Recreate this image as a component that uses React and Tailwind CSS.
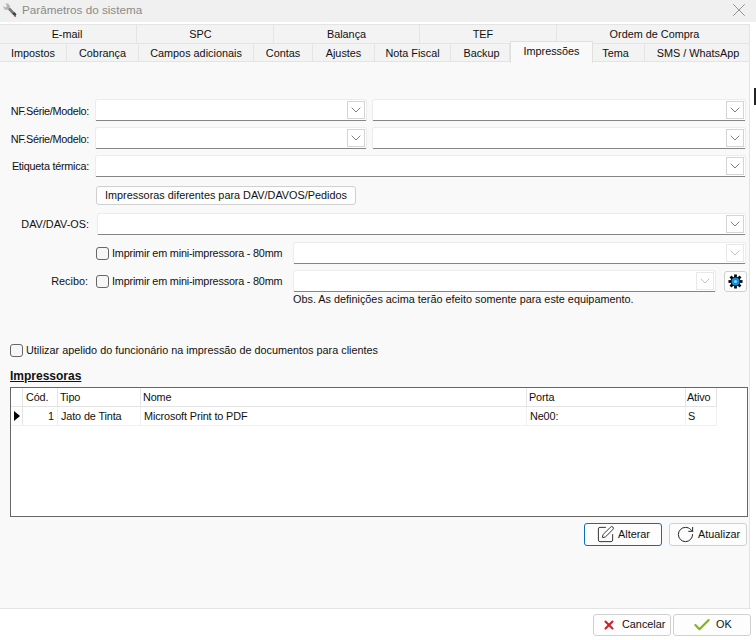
import { Check, ChevronDown, RotateCw, SquarePen, X } from "lucide-react";

const topTabs = [
  ["E-mail", "w-[137px] pr-[2px]"],
  ["SPC", "w-[137px] pr-[9px]"],
  ["Balança", "w-[146px]"],
  ["TEF", "w-[137px] pr-[10px]"],
  ["Ordem de Compra", "w-[193px] pl-[3px]"],
];

const tabs = [
  ["Impostos", "w-[67px]"],
  ["Cobrança", "w-[72px]"],
  ["Campos adicionais", "w-[115px]"],
  ["Contas", "w-[59px]"],
  ["Ajustes", "w-[62px]"],
  ["Nota Fiscal", "w-[76px]"],
  ["Backup", "w-[59px] pl-[3px]"],
  ["Impressões", "w-[83px]", true],
  ["Tema", "w-[52px] pr-[6px]"],
  ["SMS / WhatsApp", "w-[105px] pl-[2px]"],
];

const Combo = ({ className = "", disabled = false }) => (
  <div className={`flex h-[22px] items-center justify-end rounded-t-[3px] border border-b-0 border-[#ececec] bg-white pr-[1px] shadow-[inset_0_-1px_0_#858585] ${className}`}>
    <span className={`mb-[1px] flex h-[18px] w-[18px] items-center justify-center border bg-white ${disabled ? "border-[#e8e8e8] text-[#b5b5b5]" : "border-[#d4d4d4] text-[#666]"}`}>
      <ChevronDown className="h-[16px] w-[16px]" strokeWidth={1.25} />
    </span>
  </div>
);

const Label = ({ children, className = "" }) => <span className={`shrink-0 text-right ${className}`}>{children}</span>;

const CheckBox = () => <span className="h-[13px] w-[13px] shrink-0 rounded-[3px] border border-[#666] bg-[#f6f6f6]" />;

const Gear = () => (
  <svg viewBox="0 0 16 16" className="h-[15px] w-[15px]">
    <g fill="#0a0a0a">
      <rect x="6.5" y="0.5" width="3" height="15" />
      <rect x="0.5" y="6.5" width="15" height="3" />
      <rect x="6.5" y="0.5" width="3" height="15" transform="rotate(45 8 8)" />
      <rect x="6.5" y="0.5" width="3" height="15" transform="rotate(-45 8 8)" />
    </g>
    <circle cx="8" cy="8" r="5.2" fill="#0a0a0a" />
    <circle cx="8" cy="8" r="4.2" fill="#0d8fe0" />
    <circle cx="8" cy="8" r="1.7" fill="#8fd0f5" />
  </svg>
);

const Wrench = () => (
  <svg viewBox="0 0 16 16" className="h-[16px] w-[16px]">
    <path d="M1 4l2.5 1.5L5 4 3.5 1.5 6 1.5 8 4l-.5 2.5L5 8 2.5 7.5z" fill="#b4b4b4" />
    <path d="M6 7.5l2-2 5.5 6-2 2z" fill="#7a7a7a" />
    <path d="M10.5 11.5l2-1.5 2 2.5-1.5 2z" fill="#3f3f46" />
    <path d="M12 14l1.5-1 .8 1.2-1.2.9z" fill="#b04a4a" />
  </svg>
);

const columns = [
  ["Cód.", "w-[35px]", "1", "pr-[3px]", "pl-[3px]"],
  ["Tipo", "w-[83px]", "Jato de Tinta", "pl-[3px]", "pl-[2px]"],
  ["Nome", "w-[386px]", "Microsoft Print to PDF", "pl-[3px]", "pl-[2px]"],
  ["Porta", "w-[159px]", "Ne00:", "pl-[3px]", "pl-[2px]"],
  ["Ativo", "w-[31px]", "S", "pl-[2px]", "pl-[1px]"],
];

export default function App() {
  return (
    <div className="relative flex h-[640px] w-[756px] flex-col overflow-hidden bg-white font-['Liberation_Sans',sans-serif] text-[10.85px] text-[#111]">
      <span className="absolute right-0 top-[88px] h-[17px] w-[2px] bg-[#222]" />

      <header className="flex h-[22px] shrink-0 items-center bg-[#f0f0f0] pb-[2px] pl-[2px] pr-[6px]">
        <Wrench />
        <span className="ml-[4px] text-[11.7px] text-[#8a8a8a]">Parâmetros do sistema</span>
        <X className="ml-auto h-[22px] w-[22px] text-[#8a8a8a]" strokeWidth={1} />
      </header>

      <div className="mt-[2px] flex h-[19px] w-[750px] shrink-0 bg-[#f3f3f3]">
        {topTabs.map(([label, width]) => (
          <div key={label} className={`flex items-center justify-center border-r border-t border-[#e4e4e4] ${width}`}>{label}</div>
        ))}
      </div>

      <div className="relative z-10 flex h-[19px] w-[750px] shrink-0 bg-[#f3f3f3]">
        {tabs.map(([label, width, active]) => (
          active ? (
            <div key={label} className={`-mt-[2px] mb-[-1px] flex items-center justify-center border-x border-t border-[#e0e0e0] bg-[#f9f9f9] pb-[3px] ${width}`}>{label}</div>
          ) : (
            <div key={label} className={`flex items-center justify-center border-y border-r border-[#e4e4e4] pt-[1px] ${width}`}>{label}</div>
          )
        ))}
      </div>

      <main className="flex w-[750px] flex-1 flex-col border-r border-[#e4e4e4] bg-[#f9f9f9] pl-[4px] pt-[37px]">
        <div className="flex items-center">
          <Label className="w-[91px] pr-[6px] pt-[2px] tracking-[-0.3px]">NF.Série/Modelo:</Label>
          <Combo className="w-[272px]" />
          <Combo className="ml-[5px] w-[374px]" />
        </div>
        <div className="mt-[6px] flex items-center">
          <Label className="w-[91px] pr-[6px] pt-[2px] tracking-[-0.3px]">NF.Série/Modelo:</Label>
          <Combo className="w-[272px]" />
          <Combo className="ml-[5px] w-[374px]" />
        </div>
        <div className="mt-[6px] flex items-center">
          <Label className="w-[91px] pr-[6px] tracking-[-0.25px]">Etiqueta térmica:</Label>
          <Combo className="w-[651px]" />
        </div>

        <button className="ml-[92px] mt-[9px] h-[19px] w-[260px] rounded-[3px] border border-[#d0d0d0] bg-[#fdfdfd]">
          Impressoras diferentes para DAV/DAVOS/Pedidos
        </button>

        <div className="mt-[8px] flex items-center">
          <Label className="w-[92px] pr-[7px]">DAV/DAV-OS:</Label>
          <Combo className="ml-px w-[649px]" />
        </div>

        <div className="mt-[7px] flex items-center">
          <span className="w-[92px] shrink-0" />
          <CheckBox />
          <span className="ml-[3px] w-[181px] shrink-0 tracking-[-0.2px]">Imprimir em mini-impressora - 80mm</span>
          <Combo className="w-[453px]" disabled />
        </div>
        <div className="mt-[6px] flex items-center">
          <Label className="w-[92px] pr-[8px]">Recibo:</Label>
          <CheckBox />
          <span className="ml-[3px] w-[181px] shrink-0 tracking-[-0.2px]">Imprimir em mini-impressora - 80mm</span>
          <Combo className="w-[423px]" disabled />
          <button className="ml-[8px] flex h-[21px] w-[23px] items-center justify-center rounded-[3px] border border-[#d0d0d0] bg-[#fdfdfd]">
            <Gear />
          </button>
        </div>
        <p className="ml-[289px] -mt-[1px]">Obs. As definições acima terão efeito somente para este equipamento.</p>

        <div className="ml-[6px] mt-[35px] flex items-center">
          <CheckBox />
          <span className="ml-[3px]">Utilizar apelido do funcionário na impressão de documentos para clientes</span>
        </div>

        <h2 className="ml-[6px] mt-[10px] text-[12px] font-bold leading-[14px] underline">Impressoras</h2>

        <div className="ml-[6px] mt-[4px] h-[130px] w-[738px] border border-[#666] bg-white tracking-[-0.12px]">
          <div className="flex h-[19px] w-fit border-b border-[#e4e4e4]">
            <div className="w-[12px] border-r border-[#e4e4e4]" />
            {columns.map(([label, width, , , head]) => (
              <div key={label} className={`flex items-center border-r border-[#e4e4e4] pt-[1px] ${head} ${width}`}>{label}</div>
            ))}
          </div>
          <div className="flex h-[19px] w-fit border-b border-[#f0f0f0]">
            <div className="flex w-[12px] items-center justify-center border-r border-[#e4e4e4]">
              <span className="h-0 w-0 border-y-[5px] border-l-[6px] border-y-transparent border-l-black" />
            </div>
            {columns.map(([label, width, value, align]) => (
              <div key={label} className={`flex items-center border-r border-[#f0f0f0] pt-[1px] ${width} ${align} ${label === "Cód." ? "justify-end" : ""}`}>{value}</div>
            ))}
          </div>
        </div>

        <div className="ml-[6px] mt-[6px] flex w-[737px] justify-end gap-[7px]">
          <button className="flex h-[23px] w-[78px] items-center justify-start gap-[3px] rounded-[3px] border border-[#0a6cc4] bg-[#fdfdfd] pl-[11px]">
            <SquarePen className="h-[19px] w-[19px] text-[#333]" strokeWidth={1.25} />
            Alterar
          </button>
          <button className="flex h-[23px] w-[78px] items-center justify-start gap-[3px] rounded-[3px] border border-[#d0d0d0] bg-[#fdfdfd] pl-[6px]">
            <RotateCw className="h-[19px] w-[19px] text-[#222]" strokeWidth={1.25} />
            Atualizar
          </button>
        </div>
      </main>

      <footer className="flex h-[32px] w-[751px] shrink-0 items-center justify-end gap-[2px] border-t border-[#e4e4e4] bg-white">
        <button className="flex h-[22px] w-[78px] items-center justify-start gap-[6px] rounded-[3px] border border-[#d0d0d0] bg-[#fdfdfd] pl-[8px]">
          <X className="h-[14px] w-[14px] text-[#d11f2a]" strokeWidth={3.5} />
          Cancelar
        </button>
        <button className="flex h-[22px] w-[78px] items-center justify-start gap-[4px] rounded-[3px] border border-[#d0d0d0] bg-[#fdfdfd] pl-[18px]">
          <Check className="h-[20px] w-[20px] text-[#7cb518]" strokeWidth={2.5} />
          OK
        </button>
      </footer>
    </div>
  );
}
